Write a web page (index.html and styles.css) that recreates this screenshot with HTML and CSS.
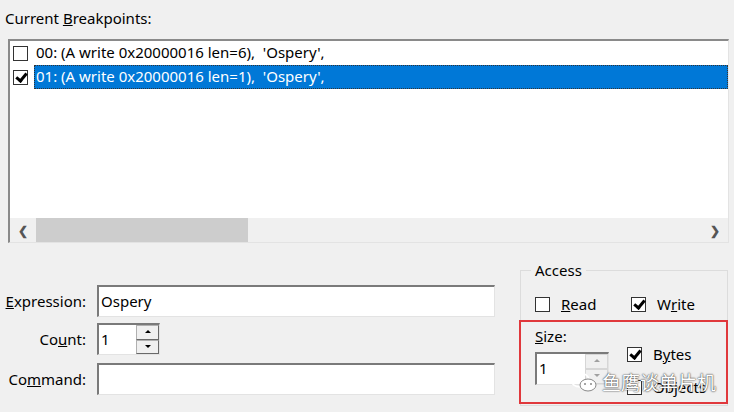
FILE: index.html
```html
<!DOCTYPE html>
<html lang="en">
<head>
    <meta charset="UTF-8">
    <title>Breakpoints</title>
    <link rel="stylesheet" href="styles.css">
</head>
<body>
    <div class="dialog">
        <div class="caption">Current <u>B</u>reakpoints:</div>
        <div class="listbox">
            <div class="rows">
                <div class="row">
                    <span class="box"></span>
                    <span class="item">00: (A write 0x20000016 len=6),  'Ospery',</span>
                </div>
                <div class="row">
                    <span class="box checked"></span>
                    <span class="item selected">01: (A write 0x20000016 len=1),  'Ospery',</span>
                </div>
            </div>
            <div class="hscroll">
                <span class="arrow">&#10094;</span>
                <div class="track"><div class="thumb"></div></div>
                <span class="arrow">&#10095;</span>
            </div>
        </div>

        <div class="lower">
            <div class="fields">
                <label class="lbl"><u>E</u>xpression:</label>
                <div class="edit">Ospery</div>
                <label class="lbl">Co<u>u</u>nt:</label>
                <div class="spin">
                    <div class="spin-text">1</div>
                    <div class="spin-btns">
                        <span class="up"></span>
                        <span class="down"></span>
                    </div>
                </div>
                <label class="lbl last">Co<u>m</u>mand:</label>
                <div class="edit last"></div>
            </div>

            <div class="group">
                <div class="legend">Access</div>
                <div class="checks">
                    <div class="check"><span class="box"></span><u>R</u>ead</div>
                    <div class="check"><span class="box checked"></span>W<u>r</u>ite</div>
                </div>
                <div class="size-row">
                    <div class="size-col">
                        <div class="size-lbl"><u>S</u>ize:</div>
                        <div class="spin small">
                            <div class="spin-text">1</div>
                            <div class="spin-btns dim">
                                <span class="up"></span>
                                <span class="down"></span>
                            </div>
                        </div>
                    </div>
                    <div class="size-checks">
                        <div class="check"><span class="box checked"></span>B<u>y</u>tes</div>
                        <div class="check"><span class="box"></span>Objects</div>
                    </div>
                </div>
                <div class="mark"></div>
                <div class="watermark">
                    <svg width="30" height="22" viewBox="0 0 30 22">
                        <ellipse cx="11" cy="9" rx="9" ry="7" fill="none" stroke="#fff" stroke-width="1.6"/>
                        <ellipse cx="19" cy="14" rx="8" ry="6" fill="#fff" stroke="#888" stroke-width="1"/>
                        <circle cx="16" cy="13" r="1" fill="#888"/>
                        <circle cx="22" cy="13" r="1" fill="#888"/>
                    </svg>
                    <span>鱼鹰谈单片机</span>
                </div>
            </div>
        </div>
    </div>
</body>
</html>
```

FILE: styles.css
```css
body {
    margin: 0;
    background: #f0f0f0;
    font-family: "Noto Sans", "Open Sans", sans-serif;
    font-size: 15px;
    color: #000;
}
.dialog {
    width: 734px;
    height: 412px;
    overflow: hidden;
}
.caption {
    padding: 8px 0 0 5px;
    height: 39px;
    box-sizing: border-box;
    line-height: 20px;
}
.listbox {
    margin-left: 8px;
    width: 721px;
    height: 204px;
    box-sizing: border-box;
    background: #fff;
    border-top: 2px solid #8a8a8a;
    border-left: 2px solid #8a8a8a;
    border-right: 1px solid #e3e3e3;
    border-bottom: 1px solid #e3e3e3;
    display: flex;
    flex-direction: column;
}
.rows {
    flex: 1;
}
.row {
    height: 24px;
    display: flex;
    align-items: center;
}
.row .box {
    margin: 0 6px 0 3px;
}
.item {
    flex: 1;
    height: 24px;
    line-height: 23px;
    padding-left: 2px;
    white-space: pre;
    box-sizing: border-box;
}
.item.selected {
    background: #0078d7;
    color: #fff;
    outline: 1px dotted #333;
    outline-offset: -1px;
}
.box {
    display: inline-block;
    width: 15px;
    height: 15px;
    box-sizing: border-box;
    border: 1px solid #333;
    background: #fff;
    position: relative;
    flex: none;
}
.box.checked::after {
    content: "";
    position: absolute;
    left: 4px;
    top: 0px;
    width: 4px;
    height: 8px;
    border-right: 3px solid #000;
    border-bottom: 3px solid #000;
    transform: rotate(40deg);
}
.hscroll {
    height: 24px;
    background: #f0f0f0;
    display: flex;
    align-items: center;
}
.arrow {
    width: 26px;
    text-align: center;
    font-size: 12px;
    font-weight: bold;
    color: #555;
}
.track {
    flex: 1;
    height: 24px;
}
.thumb {
    width: 212px;
    height: 24px;
    background: #cdcdcd;
}
.lower {
    display: flex;
    margin-top: 27px;
}
.fields {
    display: grid;
    grid-template-columns: 86px 398px;
    column-gap: 11px;
    row-gap: 6px;
    margin-top: 15px;
    align-content: start;
}
.fields .last {
    margin-top: 2px;
}
.lbl {
    text-align: right;
    line-height: 32px;
}
.edit {
    height: 32px;
    box-sizing: border-box;
    background: #fff;
    border-top: 2px solid #7a7a7a;
    border-left: 2px solid #7a7a7a;
    border-right: 1px solid #e3e3e3;
    border-bottom: 1px solid #e3e3e3;
    padding-left: 2px;
    line-height: 28px;
}
.spin {
    width: 63px;
    height: 32px;
    display: flex;
    box-sizing: border-box;
    border-top: 2px solid #7a7a7a;
    border-left: 2px solid #7a7a7a;
    border-right: 1px solid #e3e3e3;
    border-bottom: 1px solid #e3e3e3;
    background: #fff;
}
.spin-text {
    flex: 1;
    padding-left: 2px;
    line-height: 28px;
}
.spin-btns {
    width: 23px;
    display: flex;
    flex-direction: column;
}
.spin-btns span {
    flex: 1;
    background: #f0f0f0;
    border: 1px solid #b0b0b0;
    border-right-color: #696969;
    border-bottom-color: #696969;
    position: relative;
}
.spin-btns span::after {
    content: "";
    position: absolute;
    left: 8px;
    top: 4px;
    border-left: 3px solid transparent;
    border-right: 3px solid transparent;
}
.spin-btns .up::after {
    border-bottom: 3px solid #000;
}
.spin-btns .down::after {
    border-top: 3px solid #000;
}
.spin-btns.dim span {
    border-color: #d6d6d6;
}
.spin-btns.dim span::after {
    border-bottom-color: #a0a0a0;
    border-top-color: #a0a0a0;
}
.group {
    position: relative;
    margin-left: 25px;
    width: 208px;
    height: 136px;
    box-sizing: border-box;
    border: 1px solid #dcdcdc;
    padding: 24px 0 0 14px;
}
.legend {
    position: absolute;
    top: -11px;
    left: 10px;
    padding: 0 4px;
    background: #f0f0f0;
    line-height: 20px;
}
.checks {
    display: flex;
}
.check {
    display: flex;
    align-items: center;
    width: 100px;
    height: 18px;
    line-height: 18px;
}
.check .box {
    margin-right: 11px;
}
.size-row {
    display: flex;
    margin-top: 14px;
}
.size-col {
    width: 100px;
}
.size-lbl {
    line-height: 18px;
}
.spin.small {
    width: 74px;
    height: 33px;
    margin-top: 7px;
}
.size-checks {
    padding-top: 18px;
    display: flex;
    flex-direction: column;
    gap: 15px;
}
.mark {
    position: absolute;
    left: -2px;
    top: 49px;
    width: 209px;
    height: 84px;
    box-sizing: border-box;
    border: 2px solid #e0383c;
}
.watermark {
    position: absolute;
    left: 48px;
    top: 97px;
    display: flex;
    align-items: center;
    gap: 3px;
    color: #fff;
    font-family: "Noto Sans CJK SC", sans-serif;
    font-size: 19px;
    text-shadow: 0 0 2px #444, 0 0 1px #444;
}
```
